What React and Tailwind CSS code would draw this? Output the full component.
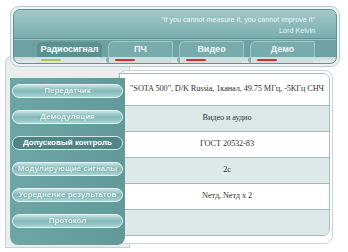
import React from 'react';

const tabs = [
  { label: 'Радиосигнал', active: true },
  { label: 'ПЧ' },
  { label: 'Видео' },
  { label: 'Демо' },
];

const menu = [
  { label: 'Передатчик' },
  { label: 'Демодуляция' },
  { label: 'Допусковый контроль', active: true },
  { label: 'Модулирующие сигналы' },
  { label: 'Усреднение результатов' },
  { label: 'Протокол' },
];

const rows = [
  '"SOTA 500", D/K Russia, 1канал, 49.75 МГц, -5КГц СНЧ',
  'Видео и аудио',
  'ГОСТ 20532-83',
  '2с',
  'Nетд, Nетд x 2',
  '',
];

function Header() {
  return (
    <div className="relative z-40 ml-[10px] mt-[5px] h-[61px] w-[330px] rounded-[9px] border border-[#b7cbcb] bg-[#eef4f4] p-[2px]">
      <div className="flex h-full flex-col overflow-hidden rounded-[7px] border border-[#5d9393] bg-gradient-to-b from-[#a2c8c8] via-[#7cafaf] to-[#6a9f9f]">
        {/* quote */}
        <div className="h-[28px] pr-[21px] pt-[4px] text-right text-[7.2px] leading-[11px] text-[#eaf5f5]">
          <div>"If you cannot measure it, you cannot improve it"</div>
          <div>Lord Kelvin</div>
        </div>
        <div className="h-px bg-[#5e9292]" />
        <div className="h-px bg-[#9cc4c4]" />

        {/* tabs */}
        <div className="flex h-[17px] items-end gap-[6px] bg-[#6ea2a2] pl-[23px]">
          {tabs.map((t) =>
            t.active ? (
              <div
                key={t.label}
                className="flex h-[15px] w-[65px] items-center justify-center rounded-t-[5px] bg-[#5a9191] pt-px text-[9px] font-bold text-white"
              >
                {t.label}
              </div>
            ) : (
              <div
                key={t.label}
                className="flex h-[16px] w-[65px] items-center justify-center rounded-tl-[6px] rounded-tr-[2px] border-l border-r border-t border-[#a1c6c6] bg-[#78abab] pt-px text-[9px] font-bold text-[#f2f8f8]"
              >
                {t.label}
              </div>
            )
          )}
        </div>

        {/* strip under tabs */}
        <div className="flex h-[6px] gap-[6px] bg-gradient-to-b from-[#c9d9d9] to-[#e2ecec] pl-[21px]">
          {tabs.map((t) => (
            <div
              key={t.label}
              className={`relative w-[65px] rounded-l-full ${t.active ? 'bg-[#d8e4e4]' : 'border-l-[3px] border-[#8fb0b0] bg-[#d2dfdf]'}`}
            >
              <div
                className={`absolute left-[6px] top-[2px] h-[2px] w-[20px] rounded-full ${t.active ? 'bg-[#a8c84a]' : 'bg-[#e02a2a]'}`}
              />
            </div>
          ))}
        </div>
      </div>
    </div>
  );
}

function Sidebar() {
  return (
    <div className="ml-[5px] h-[194px] w-[125px] shrink-0 rounded-t-[10px] border border-[#c3d2d2] bg-[#e9efef] pl-[4px] pt-[23px]">
      <div className="relative z-30 flex h-[167px] w-[115px] flex-col gap-[12px] rounded-b-[8px] bg-gradient-to-r from-[#6ea6a6] to-[#629a9a] pl-[2px] pt-[6px]">
        {menu.map((m) =>
          m.active ? (
            <div
              key={m.label}
              className="flex h-[14px] w-[111px] items-center justify-center rounded-full border border-[#d3e6e6] bg-[#4e8585] text-[8px] font-bold text-white"
            >
              {m.label}
            </div>
          ) : (
            <div
              key={m.label}
              className="flex h-[14px] w-[111px] items-center justify-center rounded-full border border-[#e4f3f3] bg-gradient-to-b from-[#c6e4e4] via-[#80b7b7] to-[#acd4d4] text-[8px] font-bold text-[#eef9f9] [text-shadow:0_0_1px_#4a7c7c]"
            >
              {m.label}
            </div>
          )
        )}
      </div>
    </div>
  );
}

function Content() {
  return (
    <div className="relative z-20 ml-[-12px] mt-[16px] h-[174px] w-[215px] rounded-[8px] border border-[#c9d6d6] bg-white pb-[7px] pr-[2px] pt-[2px]">
      <div className="overflow-hidden rounded-r-[7px] border border-[#a3bbbb]">
        {rows.map((r, i) => (
          <div
            key={i}
            className={`flex items-center justify-center whitespace-nowrap pl-[5px] font-['Liberation_Serif',serif] text-[8.3px] tracking-[-0.1px] text-[#333] ${i === 0 ? 'h-[31px]' : 'h-[26px] border-t border-[#a3bbbb]'} ${i % 2 === 1 ? 'bg-[#dde8e8]' : 'bg-white'}`}
          >
            {r}
          </div>
        ))}
      </div>
    </div>
  );
}

export default function App() {
  return (
    <div className="h-[252px] w-[348px] overflow-hidden bg-white font-['Liberation_Sans',Arial,sans-serif] pt-px">
      <Header />
      <div className="flex mt-[-13px]">
        <Sidebar />
        <Content />
      </div>
    </div>
  );
}
